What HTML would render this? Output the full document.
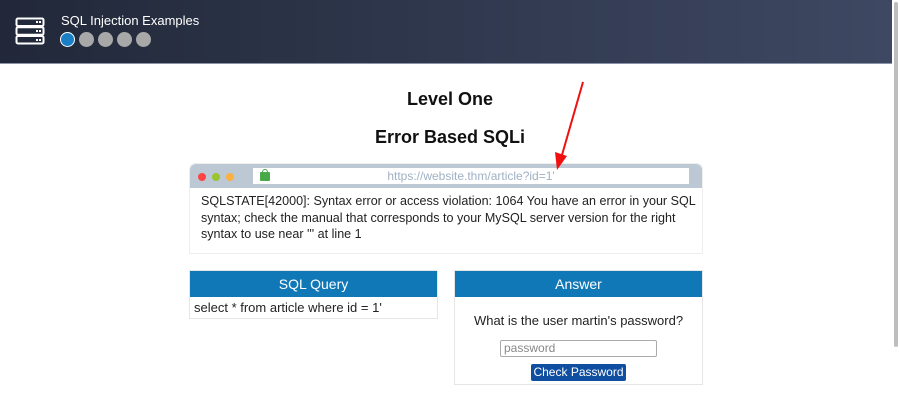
<!DOCTYPE html>
<html><head><style>
*{margin:0;padding:0;box-sizing:border-box}
body{width:900px;height:408px;background:#fff;font-family:"Liberation Sans","DejaVu Sans",sans-serif;position:relative;overflow:hidden;color:#222}
.hdr{position:absolute;left:0;top:0;width:892px;height:64px;background:linear-gradient(90deg,#212839,#3e4862);border-bottom:1px solid #8a93a8}
.sb{position:absolute;left:894px;top:2px;width:4px;height:345px;background:#bdbdc2;border-radius:2px}
.abs{position:absolute}
.dot{position:absolute;width:15px;height:15px;border-radius:50%;background:#a8a8a8;top:32px}
h1{position:absolute;width:100%;left:0;text-align:center;font-size:18px;font-weight:bold;color:#111}
.panel{position:absolute;border:1px solid #e6e6e6;background:#fff}
.ph{background:#1178b8;color:#fff;text-align:center;font-size:14px;height:26px;line-height:26px}
</style></head><body>
<div class="hdr">
<svg class="abs" style="left:15px;top:17px" width="30" height="28" viewBox="0 0 30 28"><g fill="none" stroke="#fff" stroke-width="2"><rect x="1.5" y="1.5" width="27" height="7.5" rx="1.5"/><rect x="1.5" y="10.2" width="27" height="7.5" rx="1.5"/><rect x="1.5" y="19" width="27" height="7.5" rx="1.5"/></g><g fill="#fff"><rect x="21" y="4" width="2" height="2"/><rect x="24" y="4" width="2" height="2"/><rect x="21" y="13" width="2" height="2"/><rect x="24" y="13" width="2" height="2"/><rect x="21" y="22" width="2" height="2"/><rect x="24" y="22" width="2" height="2"/></g></svg>
<div class="abs" style="left:61px;top:13px;color:#fff;font-size:13px">SQL Injection Examples</div>
<div class="dot" style="left:60px;background:#1a7fc4;border:1.5px solid #fff"></div>
<div class="dot" style="left:79px"></div>
<div class="dot" style="left:98px"></div>
<div class="dot" style="left:117px"></div>
<div class="dot" style="left:136px"></div>
</div>
<div class="sb"></div>
<h1 style="top:89px">Level One</h1>
<h1 style="top:127px">Error Based SQLi</h1>
<div class="panel" style="left:189px;top:163px;width:514px;height:91px;border-radius:6px 6px 0 0;border-color:#eee">
<div style="height:24px;background:#bcc8d3;border-radius:6px 6px 0 0;position:relative">
<div class="abs" style="left:8px;top:9px;width:8px;height:8px;border-radius:50%;background:#f44"></div>
<div class="abs" style="left:22px;top:9px;width:8px;height:8px;border-radius:50%;background:#9ac430"></div>
<div class="abs" style="left:36px;top:9px;width:8px;height:8px;border-radius:50%;background:#fbb040"></div>
<div class="abs" style="left:63px;top:4px;width:436px;height:16px;background:#fff;color:#9fb1c4;font-size:12px;line-height:16px;text-align:center">https://website.thm/article?id=1'</div>
<div class="abs" style="left:70px;top:8px;width:10px;height:9px;background:#48a84a;border-radius:1px"></div>
<div class="abs" style="left:72px;top:5px;width:6px;height:6px;border:1.5px solid #48a84a;border-bottom:none;border-radius:3px 3px 0 0"></div>
</div>
<div style="padding:5px 0 5px 11px;font-size:12.55px;line-height:16.5px;color:#222;white-space:nowrap">SQLSTATE[42000]: Syntax error or access violation: 1064 You have an error in your SQL<br>syntax; check the manual that corresponds to your MySQL server version for the right<br>syntax to use near ''' at line 1</div>
</div>
<div class="panel" style="left:189px;top:270px;width:249px;height:49px">
<div class="ph">SQL Query</div>
<div style="font-size:13px;padding:3px 4px">select * from article where id = 1'</div>
</div>
<div class="panel" style="left:454px;top:270px;width:249px;height:115px">
<div class="ph">Answer</div>
<div style="font-size:13px;text-align:center;margin-top:16px">What is the user martin's password?</div>
<div class="abs" style="left:45px;top:69px;width:157px;height:17px;border:1px solid #aaa;border-radius:2px;font-size:12px;color:#888;padding-left:3px;line-height:15px">password</div>
<div class="abs" style="left:76px;top:93px;width:95px;height:17px;background:#0f4ea0;border-radius:2px;color:#fff;font-size:12px;line-height:17px;text-align:center">Check Password</div>
</div>
<svg class="abs" style="left:0;top:0" width="900" height="408"><line x1="583" y1="82" x2="562" y2="155" stroke="#f01010" stroke-width="2"/><polygon points="557,170 555,152 567,156" fill="#f01010"/></svg>
</body></html>
